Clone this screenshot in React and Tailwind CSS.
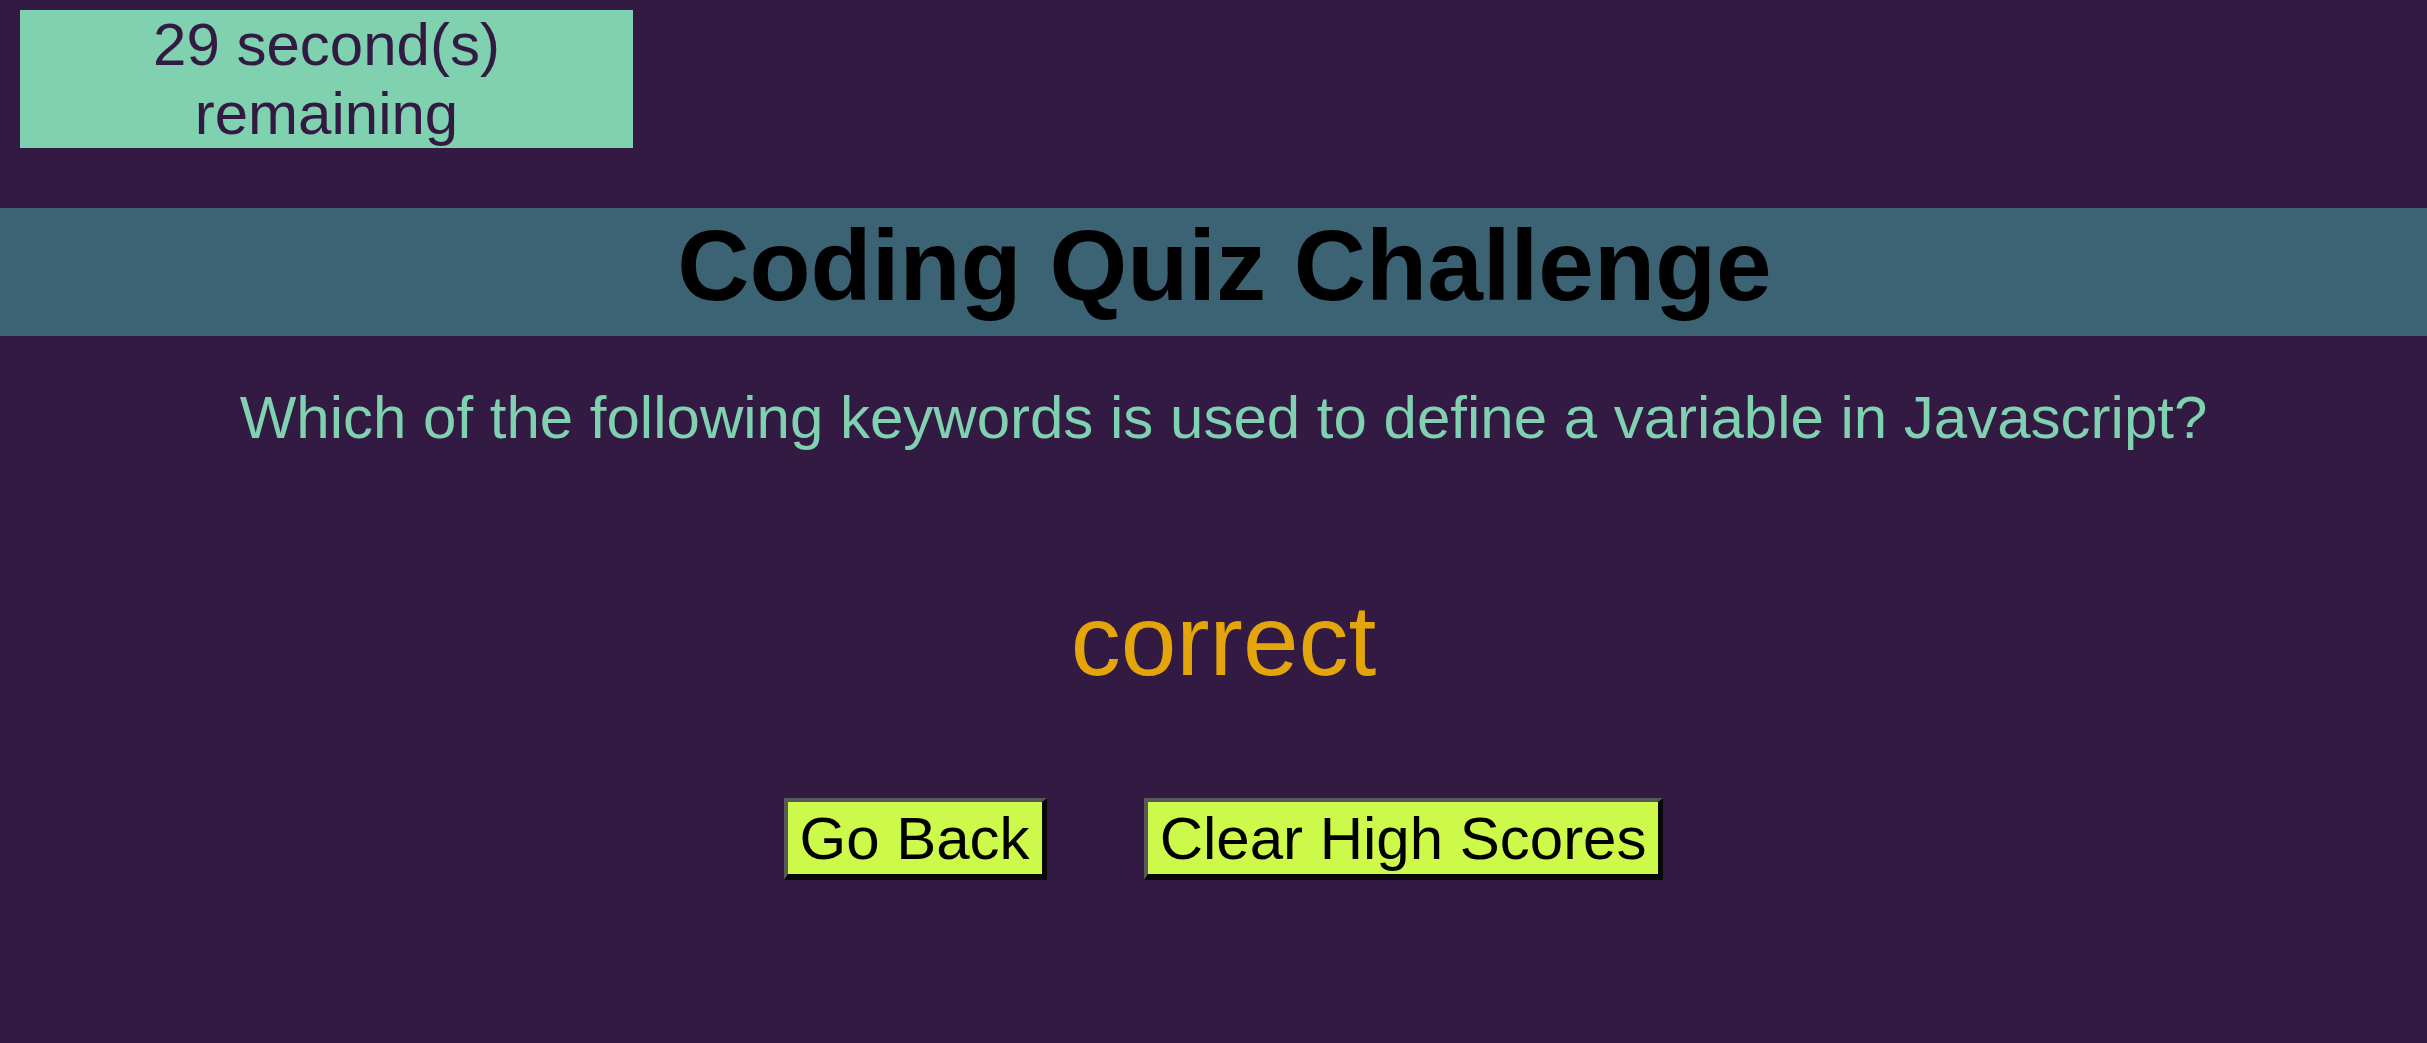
export default function App() {
  return (
    <div className="min-h-[1043px] w-full bg-[#331a42] font-['Liberation_Sans',Arial,sans-serif]">
      <div className="pl-[20px] pt-[10px]">
        <div className="flex h-[138px] w-[613px] items-center justify-center bg-[#7fd1b0] text-center text-[60px] leading-[69px] text-[#331a42]">
          <p>
            29 second(s)
            <br />
            remaining
          </p>
        </div>
      </div>
      <div className="mt-[60px] h-[128px] w-full bg-[#3c6374]">
        <h1 className="pl-[22px] text-center text-[100px] font-bold leading-[115px] text-black">
          Coding Quiz Challenge
        </h1>
      </div>
      <div className="pl-[20px]">
        <p className="mt-[47px] text-center text-[60px] leading-[69px] text-[#7fd1b0]">
          Which of the following keywords is used to define a variable in Javascript?
        </p>
        <p className="mt-[131px] text-center text-[100px] leading-[115px] text-[#e4a50b]">
          correct
        </p>
        <div className="mt-[100px] flex justify-center gap-[97px]">
          <button className="h-[82px] border-t-4 border-l-4 border-r-[5px] border-b-[6px] border-t-[#585858] border-l-[#585858] border-r-[#080808] border-b-[#080808] bg-[#cdfa4a] px-[12px] text-[60px] leading-[69px] text-black">
            Go Back
          </button>
          <button className="h-[82px] border-t-4 border-l-4 border-r-[5px] border-b-[6px] border-t-[#585858] border-l-[#585858] border-r-[#080808] border-b-[#080808] bg-[#cdfa4a] px-[12px] text-[60px] leading-[69px] text-black">
            Clear High Scores
          </button>
        </div>
      </div>
    </div>
  );
}
